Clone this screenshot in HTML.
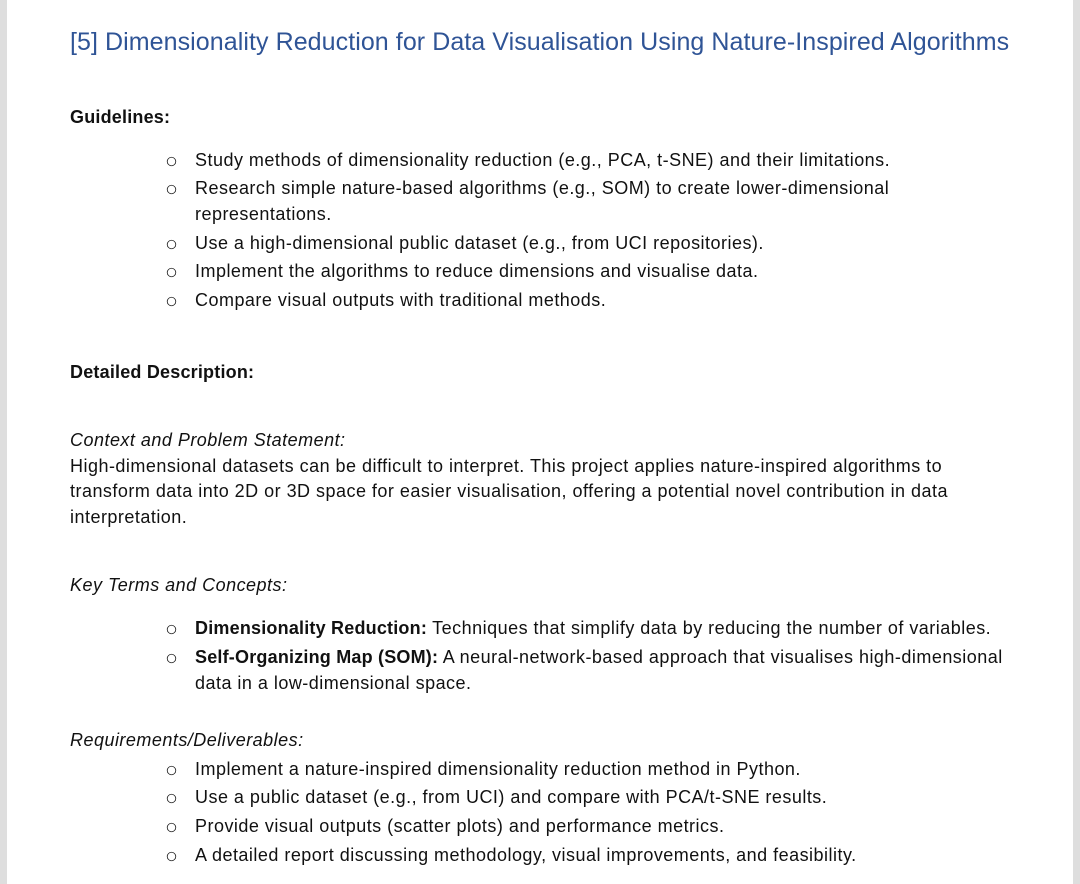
<!DOCTYPE html>
<html><head><meta charset="utf-8"><style>
html,body{margin:0;padding:0;}
body{width:1080px;height:884px;background:#fff;position:relative;overflow:hidden;font-family:"Liberation Sans",Arial,sans-serif;color:#111;}
.gl{position:absolute;top:0;left:0;width:7px;height:884px;background:#dedede;}
.gr{position:absolute;top:0;right:0;width:7px;height:884px;background:#dedede;}
.t{position:absolute;white-space:nowrap;font-size:18px;letter-spacing:0.48px;line-height:22px;}
.title{position:absolute;left:70px;top:26px;font-size:25px;letter-spacing:0.07px;color:#2f5496;white-space:nowrap;line-height:32px;}
.b{font-weight:bold;letter-spacing:0.2px;}
.i{font-style:italic;}
.o{position:absolute;left:166px;width:11px;height:11px;border:1.2px solid #222;border-radius:50%;box-sizing:border-box;transform:scale(0.85);}
</style></head><body>
<div class="gl"></div><div class="gr"></div>
<div class="title">[5] Dimensionality Reduction for Data Visualisation Using Nature-Inspired Algorithms</div>
<div class="t b" style="left:70px;top:106px">Guidelines:</div>

<div class="o" style="top:156px"></div><div class="t" style="left:195px;top:149px">Study methods of dimensionality reduction (e.g., PCA, t-SNE) and their limitations.</div>
<div class="o" style="top:184px"></div><div class="t" style="left:195px;top:177px">Research simple nature-based algorithms (e.g., SOM) to create lower-dimensional</div>
<div class="t" style="left:195px;top:203px">representations.</div>
<div class="o" style="top:239px"></div><div class="t" style="left:195px;top:232px">Use a high-dimensional public dataset (e.g., from UCI repositories).</div>
<div class="o" style="top:267px"></div><div class="t" style="left:195px;top:260px">Implement the algorithms to reduce dimensions and visualise data.</div>
<div class="o" style="top:296px"></div><div class="t" style="left:195px;top:289px">Compare visual outputs with traditional methods.</div>

<div class="t b" style="left:70px;top:361px">Detailed Description:</div>
<div class="t i" style="left:70px;top:429px">Context and Problem Statement:</div>
<div class="t" style="left:70px;top:455px">High-dimensional datasets can be difficult to interpret. This project applies nature-inspired algorithms to</div>
<div class="t" style="left:70px;top:480px">transform data into 2D or 3D space for easier visualisation, offering a potential novel contribution in data</div>
<div class="t" style="left:70px;top:506px">interpretation.</div>

<div class="t i" style="left:70px;top:574px">Key Terms and Concepts:</div>
<div class="o" style="top:624px"></div><div class="t" style="left:195px;top:617px"><span class="b">Dimensionality Reduction:</span> Techniques that simplify data by reducing the number of variables.</div>
<div class="o" style="top:653px"></div><div class="t" style="left:195px;top:646px"><span class="b">Self-Organizing Map (SOM):</span> A neural-network-based approach that visualises high-dimensional</div>
<div class="t" style="left:195px;top:672px">data in a low-dimensional space.</div>

<div class="t i" style="left:70px;top:729px">Requirements/Deliverables:</div>
<div class="o" style="top:765px"></div><div class="t" style="left:195px;top:758px">Implement a nature-inspired dimensionality reduction method in Python.</div>
<div class="o" style="top:793px"></div><div class="t" style="left:195px;top:786px">Use a public dataset (e.g., from UCI) and compare with PCA/t-SNE results.</div>
<div class="o" style="top:822px"></div><div class="t" style="left:195px;top:815px">Provide visual outputs (scatter plots) and performance metrics.</div>
<div class="o" style="top:851px"></div><div class="t" style="left:195px;top:844px">A detailed report discussing methodology, visual improvements, and feasibility.</div>
</body></html>
